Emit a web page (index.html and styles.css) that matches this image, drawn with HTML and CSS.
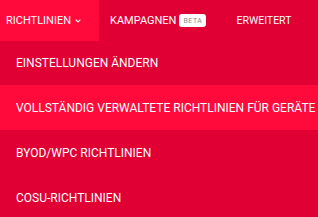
FILE: index.html
```html
<!DOCTYPE html>
<html lang="de">
<head>
<meta charset="utf-8">
<link rel="stylesheet" href="styles.css">
</head>
<body>
<nav class="nav">
  <div class="tab tab-active">RICHTLINIEN
    <svg class="chev" width="6" height="4" viewBox="0 0 6 4"><path d="M0.7 0.7 L3 3 L5.3 0.7" fill="none" stroke="#fff" stroke-width="1.2"/></svg>
  </div>
  <div class="tab tab-camp">KAMPAGNEN <span class="badge">BETA</span></div>
  <div class="tab tab-ext">ERWEITERT</div>
</nav>
<ul class="menu">
  <li class="item">EINSTELLUNGEN ÄNDERN</li>
  <li class="item item-hover">VOLLSTÄNDIG VERWALTETE RICHTLINIEN FÜR GERÄTE</li>
  <li class="item">BYOD/WPC RICHTLINIEN</li>
  <li class="item">COSU-RICHTLINIEN</li>
</ul>
</body>
</html>
```
FILE: styles.css
```css
html, body {
  margin: 0;
  padding: 0;
  background: #e00033;
}
body {
  font-family: "Roboto", "Liberation Sans", sans-serif;
  color: #fff;
  width: 318px;
  height: 217px;
  overflow: hidden;
}
.nav {
  display: flex;
  height: 41px;
  background: #e00033;
}
.tab {
  display: flex;
  align-items: center;
  font-size: 11px;
  white-space: nowrap;
}
.tab-active {
  width: 99px;
  box-sizing: border-box;
  padding-left: 6px;
  background: #ff0a3b;
}
.chev {
  margin-left: 4px;
  margin-top: 1px;
}
.tab-camp {
  padding-left: 11px;
}
.badge {
  display: inline-flex;
  align-items: center;
  justify-content: center;
  margin-left: 3px;
  width: 27px;
  height: 13px;
  background: #fff;
  color: #8a8a8a;
  border-radius: 3px;
  font-size: 7px;
  letter-spacing: 0.5px;
}
.tab-ext {
  padding-left: 30px;
  font-size: 10.5px;
}
.menu {
  list-style: none;
  margin: 0;
  padding: 0;
  margin-top: -1px;
}
.item {
  height: 45px;
  display: flex;
  align-items: center;
  padding-left: 16px;
  font-size: 12px;
  white-space: nowrap;
}
.item-hover {
  background: #ff0a3b;
}
```
